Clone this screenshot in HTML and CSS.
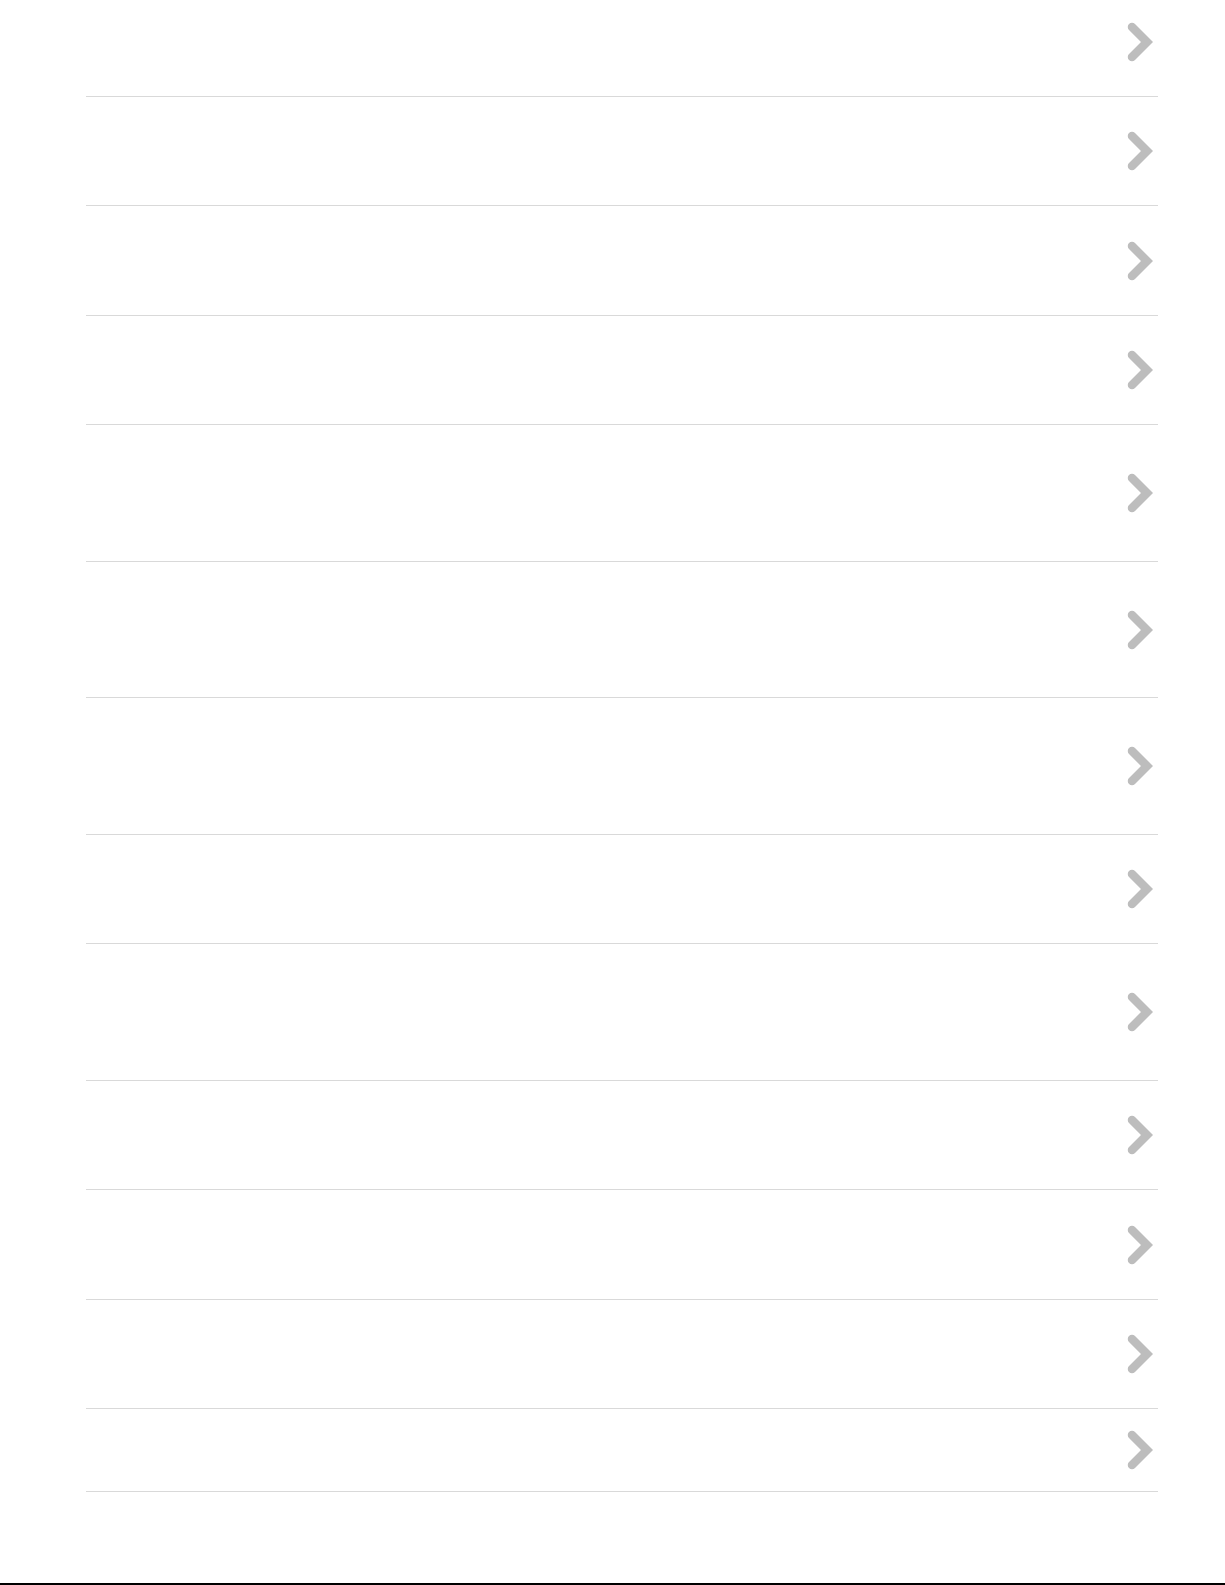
FILE: index.html
```html
<!DOCTYPE html>
<html lang="en">
<head>
  <meta charset="UTF-8">
  <meta name="viewport" content="width=device-width, initial-scale=1.0">
  <title>List</title>
  <link rel="stylesheet" href="styles.css">
</head>
<body>

<!-- Item list, each row ends with a chevron -->
<ul class="item-list">
  <li class="item"><svg class="chevron" viewBox="0 0 28 40"><path d="M3 8A4.24 4.24 0 0 1 9 2L27 20 9 38A4.24 4.24 0 0 1 3 32L15 20Z"/></svg></li>
  <li class="item"><svg class="chevron" viewBox="0 0 28 40"><path d="M3 8A4.24 4.24 0 0 1 9 2L27 20 9 38A4.24 4.24 0 0 1 3 32L15 20Z"/></svg></li>
  <li class="item"><svg class="chevron" viewBox="0 0 28 40"><path d="M3 8A4.24 4.24 0 0 1 9 2L27 20 9 38A4.24 4.24 0 0 1 3 32L15 20Z"/></svg></li>
  <li class="item"><svg class="chevron" viewBox="0 0 28 40"><path d="M3 8A4.24 4.24 0 0 1 9 2L27 20 9 38A4.24 4.24 0 0 1 3 32L15 20Z"/></svg></li>
  <li class="item tall"><svg class="chevron" viewBox="0 0 28 40"><path d="M3 8A4.24 4.24 0 0 1 9 2L27 20 9 38A4.24 4.24 0 0 1 3 32L15 20Z"/></svg></li>
  <li class="item tall"><svg class="chevron" viewBox="0 0 28 40"><path d="M3 8A4.24 4.24 0 0 1 9 2L27 20 9 38A4.24 4.24 0 0 1 3 32L15 20Z"/></svg></li>
  <li class="item tall"><svg class="chevron" viewBox="0 0 28 40"><path d="M3 8A4.24 4.24 0 0 1 9 2L27 20 9 38A4.24 4.24 0 0 1 3 32L15 20Z"/></svg></li>
  <li class="item"><svg class="chevron" viewBox="0 0 28 40"><path d="M3 8A4.24 4.24 0 0 1 9 2L27 20 9 38A4.24 4.24 0 0 1 3 32L15 20Z"/></svg></li>
  <li class="item tall"><svg class="chevron" viewBox="0 0 28 40"><path d="M3 8A4.24 4.24 0 0 1 9 2L27 20 9 38A4.24 4.24 0 0 1 3 32L15 20Z"/></svg></li>
  <li class="item"><svg class="chevron" viewBox="0 0 28 40"><path d="M3 8A4.24 4.24 0 0 1 9 2L27 20 9 38A4.24 4.24 0 0 1 3 32L15 20Z"/></svg></li>
  <li class="item"><svg class="chevron" viewBox="0 0 28 40"><path d="M3 8A4.24 4.24 0 0 1 9 2L27 20 9 38A4.24 4.24 0 0 1 3 32L15 20Z"/></svg></li>
  <li class="item"><svg class="chevron" viewBox="0 0 28 40"><path d="M3 8A4.24 4.24 0 0 1 9 2L27 20 9 38A4.24 4.24 0 0 1 3 32L15 20Z"/></svg></li>
  <li class="item short"><svg class="chevron" viewBox="0 0 28 40"><path d="M3 8A4.24 4.24 0 0 1 9 2L27 20 9 38A4.24 4.24 0 0 1 3 32L15 20Z"/></svg></li>
</ul>

<footer class="page-footer"></footer>

</body>
</html>
```

FILE: styles.css
```css
/* Global body styles */
body {
  margin: 0;
  font-family: "Liberation Sans", Arial, sans-serif;
  background: #fff;
  overflow: hidden;
}

:root {
  --divider: #d9d9d9;
  --chevron: #bdbdbd;
}

/* List */
.item-list {
  list-style: none;
  margin: -12.4px 67px 0 86px;
  padding: 0;
}

.item {
  box-sizing: border-box;
  height: 109.4px;
  display: flex;
  align-items: center;
  justify-content: flex-end;
  border-bottom: 1px solid var(--divider);
}

.item.tall {
  height: 136.6px;
}

.item.short {
  height: 83px;
}

.chevron {
  width: 28px;
  height: 40px;
  margin-right: 4px;
  fill: var(--chevron);
  filter: blur(0.5px); /* the source icon is an upscaled bitmap */
}

/* Bottom edge */
.page-footer {
  margin-top: 91px;
  border-top: 2px solid #000;
  height: 40px;
}
```
